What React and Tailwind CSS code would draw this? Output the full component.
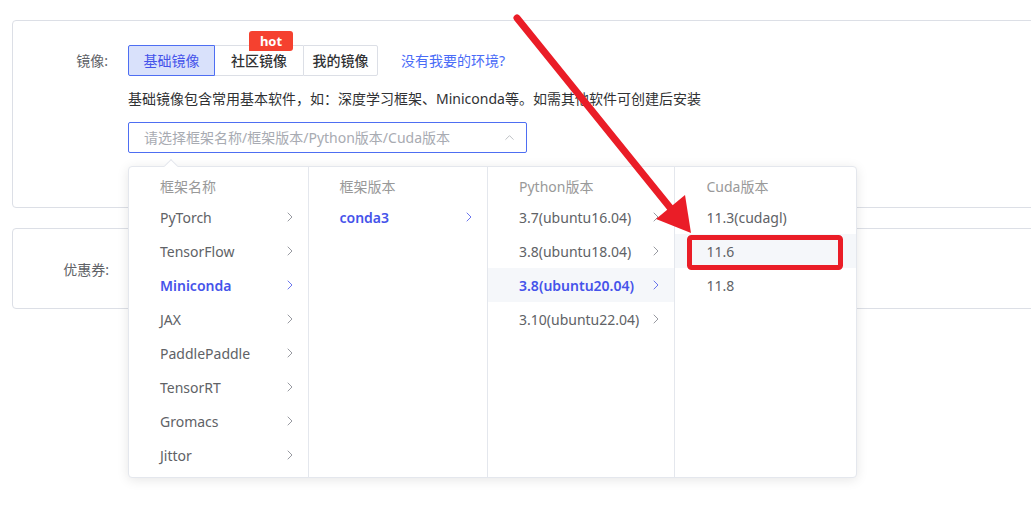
import { ChevronRight, ChevronUp } from "lucide-react";

const font = { fontFamily: '"Noto Sans", "Noto Sans CJK SC", sans-serif' };

const columns = [
  {
    title: "框架名称",
    width: "w-[180px]",
    items: ["PyTorch", "TensorFlow", "Miniconda", "JAX", "PaddlePaddle", "TensorRT", "Gromacs", "Jittor"],
    active: 2,
    arrow: true,
  },
  { title: "框架版本", width: "w-[180px]", items: ["conda3"], active: 0, arrow: true },
  {
    title: "Python版本",
    width: "w-[188px]",
    items: ["3.7(ubuntu16.04)", "3.8(ubuntu18.04)", "3.8(ubuntu20.04)", "3.10(ubuntu22.04)"],
    active: 2,
    shaded: 2,
    arrow: true,
  },
  { title: "Cuda版本", width: "w-[181px]", items: ["11.3(cudagl)", "11.6", "11.8"], shaded: 1, arrow: false },
];

const Column = ({ col, last }) => (
  <div className={`${col.width} pt-[5px] ${last ? "" : "border-r border-[#e4e7ed]"}`}>
    <div className="h-[28px] pl-[31px] flex items-center text-[14px] text-[#999]">{col.title}</div>
    {col.items.map((it, i) => {
      const active = col.active === i;
      return (
        <div
          key={it}
          className={`h-[34px] pl-[31px] pr-[10px] flex items-center justify-between text-[14px] ${
            col.shaded === i ? "bg-[#f5f7fa]" : ""
          } ${active ? "text-[#4553ea] font-semibold" : "text-[#606266]"}`}
        >
          <span>{it}</span>
          {col.arrow && <ChevronRight size={16} strokeWidth={1.2} className={active ? "text-[#4553ea]" : "text-[#7d8089]"} />}
        </div>
      );
    })}
  </div>
);

export default function App() {
  return (
    <div className="relative w-[1031px] h-[507px] overflow-hidden bg-white" style={font}>
      <div className="pt-[20px] pl-[12px]">
        {/* 镜像 */}
        <div className="w-[1040px] h-[188px] border border-[#dcdfe6] rounded-[4px] pt-[24px] flex">
          <div className="w-[95px] text-right text-[14px] text-[#606266] leading-[31px]">镜像:</div>
          <div className="ml-[20px]">
            <div className="flex items-center">
              <div className="flex h-[31px] text-[14px]">
                <div className="w-[87px] flex items-center justify-center border border-[#4e6ef2] bg-[#d9e1fb] text-[#4553ea] rounded-l-[2px]">
                  基础镜像
                </div>
                <div className="relative w-[88px] flex items-center justify-center border-y border-[#dcdfe6] text-[#303133] font-medium">
                  社区镜像
                  <span className="absolute -top-[15px] right-[10px] w-[44px] h-[20px] rounded-t-[3px] rounded-br-[3px] bg-[#f5412f] text-white text-[13px] font-bold flex items-center justify-center leading-none">
                    hot
                  </span>
                </div>
                <div className="w-[75px] flex items-center justify-center border border-[#dcdfe6] text-[#303133] font-medium rounded-r-[2px]">
                  我的镜像
                </div>
              </div>
              <span className="ml-[23px] text-[14px] text-[#4a6cf7]">没有我要的环境?</span>
            </div>
            <div className="mt-[14px] text-[14px] text-[#303133] leading-[18px]">
              基础镜像包含常用基本软件，如：深度学习框架、Miniconda等。如需其他软件可创建后安装
            </div>
            <div className="mt-[14px] w-[399px] h-[31px] border border-[#4e6ef2] rounded-[2px] flex items-center justify-between pl-[15px] pr-[9px]">
              <span className="text-[14px] text-[#a8abb2]">请选择框架名称/框架版本/Python版本/Cuda版本</span>
              <ChevronUp size={15} strokeWidth={1.2} className="text-[#a8abb2]" />
            </div>
          </div>
        </div>

        {/* 优惠券 */}
        <div className="mt-[20px] w-[1040px] h-[81px] border border-[#dcdfe6] rounded-[4px] flex items-center">
          <div className="w-[96px] text-right text-[14px] text-[#606266] pt-[1px]">优惠券:</div>
        </div>
      </div>

      {/* cascader dropdown */}
      <div className="absolute left-[128px] top-[166px] w-[729px] h-[312px] bg-white border border-[#e4e7ed] rounded-[4px] shadow-[0_2px_12px_rgba(0,0,0,0.1)] flex">
        <div className="absolute -top-[6px] left-[37px] w-[10px] h-[10px] bg-white border-l border-t border-[#e4e7ed] rotate-45" />
        {columns.map((c, i) => (
          <Column key={c.title} col={c} last={i === columns.length - 1} />
        ))}
      </div>

      {/* red annotation */}
      <svg className="absolute inset-0 pointer-events-none" width="1031" height="507">
        <line x1="517" y1="18" x2="672" y2="210" stroke="#ea1d27" strokeWidth="7" strokeLinecap="round" />
        <polygon points="656,219 691,233 685,195" fill="#ea1d27" />
        <rect x="689.5" y="237.5" width="151" height="30" rx="2" fill="none" stroke="#ea1d27" strokeWidth="5" />
      </svg>
    </div>
  );
}
